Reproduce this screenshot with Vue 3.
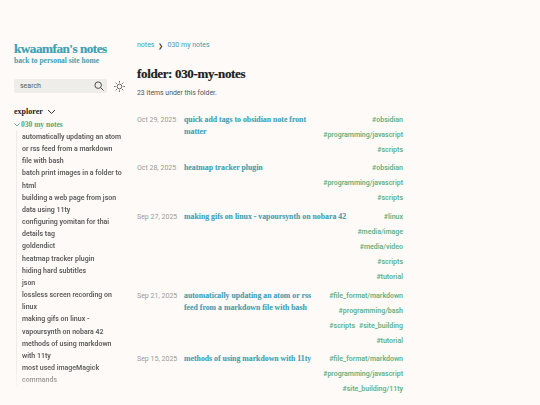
<script setup>
const notes = [
  'automatically updating an atom or rss feed from a markdown file with bash',
  'batch print images in a folder to html',
  'building a web page from json data using 11ty',
  'configuring yomitan for thai details tag',
  'goldendict',
  'heatmap tracker plugin',
  'hiding hard subtitles',
  'json',
  'lossless screen recording on linux',
  'making gifs on linux - vapoursynth on nobara 42',
  'methods of using markdown with 11ty',
  'most used imageMagick commands',
]

const items = [
  { date: 'Oct 29, 2025', title: 'quick add tags to obsidian note front matter', tags: [['#obsidian'], ['#programming/javascript'], ['#scripts']] },
  { date: 'Oct 28, 2025', title: 'heatmap tracker plugin', tags: [['#obsidian'], ['#programming/javascript'], ['#scripts']] },
  { date: 'Sep 27, 2025', title: 'making gifs on linux - vapoursynth on nobara 42', tags: [['#linux'], ['#media/image'], ['#media/video'], ['#scripts'], ['#tutorial']] },
  { date: 'Sep 21, 2025', title: 'automatically updating an atom or rss feed from a markdown file with bash', tags: [['#file_format/markdown'], ['#programming/bash'], ['#scripts', '#site_building'], ['#tutorial']] },
  { date: 'Sep 15, 2025', title: 'methods of using markdown with 11ty', tags: [['#file_format/markdown'], ['#programming/javascript'], ['#site_building/11ty']] },
  { date: '', title: 'most used imageMagick commands', tags: [['#linux']] },
]
</script>

<template>
  <div class="page">
    <aside class="side">
      <h2 class="site">kwaamfan's notes</h2>
      <a class="back">back to personal site home</a>
      <div class="tools">
        <div class="search">
          <span>search</span>
          <svg width="10" height="10" viewBox="0 0 12 12" fill="none" stroke="#4e4e4e" stroke-width="1.2">
            <circle cx="5" cy="5" r="3.9" />
            <path d="M8 8l3.4 3.4" />
          </svg>
        </div>
        <svg class="sun" width="11" height="11" viewBox="0 0 12 12" fill="none" stroke="#4e4e4e" stroke-width="0.9">
          <circle cx="6" cy="6" r="2.6" />
          <path d="M6 0v1.8M6 10.2V12M0 6h1.8M10.2 6H12M1.8 1.8l1.3 1.3M8.9 8.9l1.3 1.3M1.8 10.2l1.3-1.3M8.9 3.1l1.3-1.3" />
        </svg>
      </div>
      <div class="explorer">
        <span>explorer</span>
        <svg width="9" height="6" viewBox="0 0 9 6" fill="none" stroke="#333" stroke-width="1">
          <path d="M1 1l3.5 3.5L8 1" />
        </svg>
      </div>
      <div class="folder">
        <svg width="6" height="4" viewBox="0 0 6 4" fill="none" stroke="#56a878" stroke-width="0.9">
          <path d="M0.5 0.5L3 3l2.5-2.5" />
        </svg>
        <span>030 my notes</span>
      </div>
      <ul class="tree">
        <li v-for="n in notes" :key="n">{{ n }}</li>
      </ul>
    </aside>

    <main class="main">
      <nav class="crumbs">
        <a>notes</a>
        <span class="sep">❯</span>
        <a>030 my notes</a>
      </nav>
      <h1>folder: 030-my-notes</h1>
      <p class="count">23 items under this folder.</p>
      <ul class="list">
        <li v-for="it in items" :key="it.title" class="row">
          <span class="date">{{ it.date }}</span>
          <a class="title">{{ it.title }}</a>
          <div class="tags">
            <div v-for="line in it.tags" :key="line[0]" class="tagline">
              <span v-for="t in line" :key="t">{{ t }}</span>
            </div>
          </div>
        </li>
      </ul>
    </main>
  </div>
</template>

<style scoped>
.page {
  display: flex;
  height: 405px;
  overflow: hidden;
  background: #fdfaf7;
  font-family: Roboto, "Open Sans", sans-serif;
}
.side {
  width: 137px;
  flex: none;
  padding: 42px 0 0 14px;
  box-sizing: border-box;
}
.site {
  margin: 0;
  font: 700 13.2px/14px "Liberation Serif", serif;
  letter-spacing: -0.5px;
  white-space: nowrap;
  color: #3f9fb3;
  -webkit-text-stroke: 0.2px #3f9fb3;
}
.back {
  display: block;
  margin-top: -1px;
  font: 700 7.5px/12px "Liberation Serif", serif;
  color: #3f9fb3;
}
.tools {
  display: flex;
  align-items: center;
  gap: 7px;
  margin-top: 12px;
}
.search {
  width: 93px;
  height: 14px;
  box-sizing: border-box;
  padding: 0 3px 0 6px;
  display: flex;
  align-items: center;
  justify-content: space-between;
  background: #efedea;
  border-radius: 2px;
  font-size: 7px;
  color: #5a5a5a;
}
.explorer {
  display: flex;
  align-items: center;
  gap: 4px;
  margin-top: 13px;
  font: 700 8px/12px "Liberation Serif", serif;
  color: #222;
}
.folder {
  display: flex;
  align-items: center;
  gap: 1px;
  margin-top: 1px;
  font: 700 7.5px/12px "Liberation Serif", serif;
  color: #56a878;
}
.tree {
  margin: 0 0 0 2px;
  padding: 0 14.5px 0 5px;
  border-left: 1px solid #eeebe8;
  list-style: none;
  font-size: 7px;
  font-weight: 600;
  line-height: 12.15px;
  color: #5b5b5b;
  -webkit-mask-image: linear-gradient(#000 236px, transparent 266px);
  mask-image: linear-gradient(#000 236px, transparent 266px);
}
.main {
  width: 266px;
  flex: none;
  padding-top: 40px;
}
.crumbs {
  display: flex;
  align-items: center;
  gap: 4px;
  font-size: 7px;
  line-height: 11px;
  color: #3f9fb3;
}
.sep {
  font-size: 6px;
  color: #333;
}
h1 {
  margin: 14px 0 0;
  font: 700 13px/18px "Liberation Serif", serif;
  letter-spacing: -0.35px;
  color: #1e1e1e;
  -webkit-text-stroke: 0.2px #1e1e1e;
}
.count {
  margin: 5px 0 0;
  font-size: 6.9px;
  line-height: 11px;
  color: #555;
}
.list {
  margin: 13.5px 0 0;
  padding: 0;
  list-style: none;
}
.row {
  display: grid;
  grid-template-columns: 47px 1fr auto;
  padding-bottom: 3.7px;
  align-items: start;
}
.row:last-child {
  margin-top: 0.8px;
}
.date {
  font-size: 7px;
  line-height: 15px;
  color: #9a9a96;
}
.title {
  padding: 1px 10px 0 0;
  font: 700 7.8px/12px "Liberation Serif", serif;
  color: #3f9fb3;
  -webkit-text-stroke: 0.1px #3f9fb3;
}
.tags {
  display: flex;
  flex-direction: column;
  align-items: flex-end;
  font-size: 7px;
  font-weight: 600;
  line-height: 15px;
  color: #64b184;
}
.tagline {
  display: flex;
  gap: 4px;
}
</style>

<style>
html, body { background: #fdfaf7; }
</style>
